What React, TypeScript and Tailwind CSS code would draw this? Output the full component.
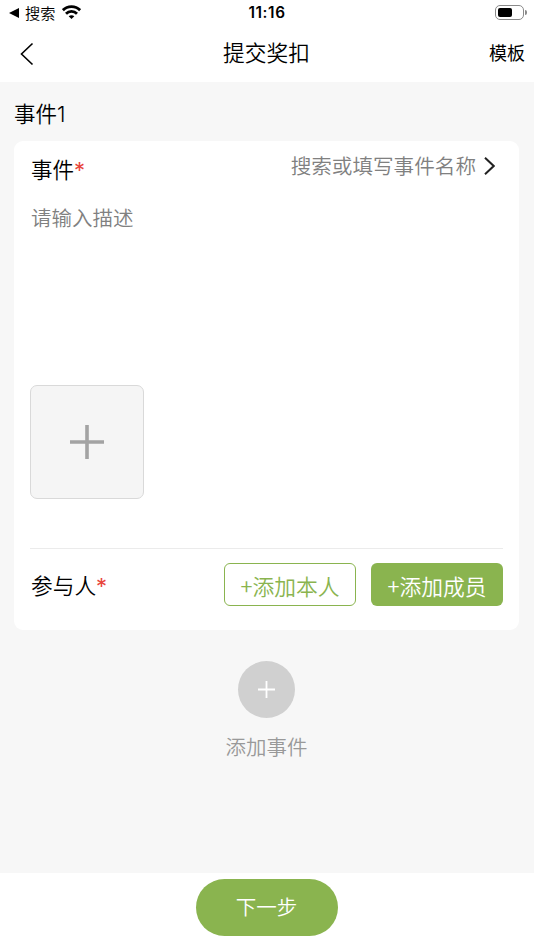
const StatusBar = () => {
    return (
    <div className="h-[26px] grid grid-cols-3 items-center pl-[9px] pr-[7px] text-black">
        <div className="flex items-center">
            <svg className="w-[10px] h-[10px]" viewBox="0 0 10 10">
                <path d="M0 5 L10 0 V10 Z" fill="currentColor" />
            </svg>
            <span className="ml-[6px] -mt-[2px] text-[15.2px] leading-[26px] font-[350]">搜索</span>
            <svg className="ml-[7px] -mt-[2px] w-[19px] h-[14px]" viewBox="0 0 19 14" fill="none" stroke="currentColor" strokeWidth="2.8">
                <path d="M0.9 5.2 C5.6 0.4 13.4 0.4 18.1 5.2" />
                <path d="M4 8.7 C7 5.7 12 5.7 15 8.7" />
                <path d="M9.5 14 L6.7 11.2 C8.2 9.9 10.8 9.9 12.3 11.2 Z" fill="currentColor" stroke="none" />
            </svg>
        </div>
        <div className="text-center font-[Inter] font-semibold text-[15.3px] tracking-[0.6px] leading-[26px] -ml-[2px]">11:16</div>
        <div className="flex items-center justify-end -mt-[2px]">
            <div className="w-[29px] h-[15px] rounded-[5px] border border-[#8a8a8a] p-[2px]">
                <div className="w-[14px] h-full rounded-[2px] bg-black" />
            </div>
            <div className="ml-[1px] w-[2px] h-[5px] rounded-r-full bg-[#8a8a8a]" />
        </div>
    </div>
    );
}

const Header = () => {
    return (
    <header className="h-[56px] grid grid-cols-3 items-center pl-[20px] pr-[9px] text-black">
        <button className="w-[14px]" aria-label="返回">
            <svg className="w-[14px] h-[24px]" viewBox="0 0 14 24" fill="none" stroke="currentColor" strokeWidth="1.6">
                <path d="M12.5 1.5 L1.5 12 L12.5 22.5" />
            </svg>
        </button>
        <h1 className="text-center text-[21.7px] leading-[32px] font-[350] whitespace-nowrap -ml-[12px] -mt-[4px]">提交奖扣</h1>
        <button className="text-right text-[18px] leading-[26px] -mt-[4px]">模板</button>
    </header>
    );
}

const Required = () => {
    return <span className="font-[Inter] font-normal text-[22px] leading-none text-[#e8453c]">*</span>;
}

const App = () => {
    return (
    <div className="w-full h-[950px] flex flex-col bg-[#f7f7f7] font-['Noto_Sans_CJK_SC',sans-serif]">
        <div className="h-[82px] shrink-0 bg-white">
            <StatusBar />
            <Header />
        </div>

        <main className="flex-1 px-[14px] pr-[15px]">
            <h2 className="h-[59px] pt-[15px] text-[21.5px] leading-[32px] font-[350] text-black">事件<span className="font-[Inter] font-light leading-none">1</span></h2>

            <section className="h-[489px] flex flex-col rounded-[9px] bg-white px-[16px]">
                <div className="h-[44px] flex justify-between pt-[8px]">
                    <div className="pt-[4px] pl-[1px] text-[21.5px] leading-[32px] font-[350] text-black">事件<Required /></div>
                    <div className="flex items-center h-[32px] pr-[8px]">
                        <span className="text-[20.6px] font-[350] text-[#808080]">搜索或填写事件名称</span>
                        <svg className="ml-[8px] mt-[2px] w-[11px] h-[18px]" viewBox="0 0 11 18" fill="none" stroke="#222" strokeWidth="2">
                            <path d="M1 0.8 L9.7 9 L1 17.2" />
                        </svg>
                    </div>
                </div>
                <p className="mt-[16px] pl-[1px] text-[20.5px] leading-[32px] font-[350] text-[#808080]">请输入描述</p>

                <button className="mt-[152px] w-[114px] h-[114px] shrink-0 rounded-[7px] border border-[#d9d9d9] bg-[#f5f5f5] flex items-center justify-center" aria-label="上传">
                    <svg className="w-[34px] h-[34px]" viewBox="0 0 34 34" stroke="#a3a3a3" strokeWidth="3.6">
                        <path d="M17 0 V34 M0 17 H34" />
                    </svg>
                </button>

                <div className="mt-[49px] border-t border-[#ebebeb] flex items-start pt-[14px]">
                    <div className="pt-[6px] pl-[1px] text-[21.7px] leading-[32px] font-[350] text-black">参与人<Required /></div>
                    <button className="ml-auto w-[132px] h-[43px] rounded-[6px] border-[1.5px] border-[#8ab44f] text-[#8ab44f] text-[21.8px] leading-[43px] font-[350]">+添加本人</button>
                    <button className="ml-[15px] w-[132px] h-[43px] rounded-[6px] bg-[#8ab44f] text-white text-[21.8px] leading-[45px] font-[350]">+添加成员</button>
                </div>
            </section>

            <div className="mt-[31px] flex flex-col items-center">
                <button className="w-[57px] h-[57px] rounded-full bg-[#d0d0d0] flex items-center justify-center" aria-label="添加">
                    <svg className="w-[17px] h-[17px]" viewBox="0 0 17 17" stroke="#fff" strokeWidth="1.8">
                        <path d="M8.5 0 V17 M0 8.5 H17" />
                    </svg>
                </button>
                <div className="mt-[12px] text-[20.5px] leading-[32px] font-[350] text-[#999]">添加事件</div>
            </div>
        </main>

        <footer className="h-[77px] shrink-0 bg-white flex justify-center pt-[6px]">
            <button className="w-[142px] h-[57px] -ml-px rounded-full bg-[#8ab44f] text-white text-[20.5px] leading-[55px] pb-[2px] font-[350]">下一步</button>
        </footer>
    </div>
    );
}

export default App;
